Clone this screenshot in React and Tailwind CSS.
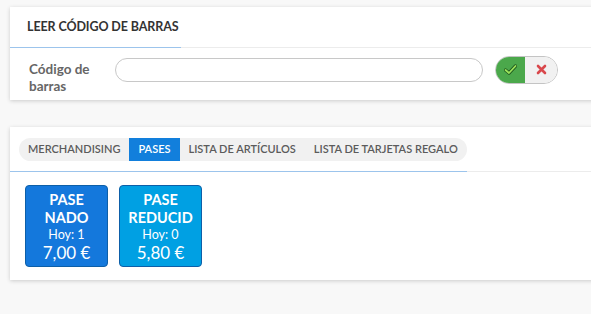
import React from "react";

const Tile = ({ title, sub, hoy, price, color }) => (
  <button
    className={`w-[83px] h-[82px] rounded-[4px] border border-[#0d5fa8] ${color} text-white flex flex-col items-center pt-[5px] leading-none overflow-hidden`}
  >
    <span className="text-[14.5px] font-bold h-[18px] flex items-center">{title}</span>
    <span className="text-[14.5px] font-bold h-[18px] flex items-center whitespace-nowrap">{sub}</span>
    <span className="text-[12.5px] h-[16px] flex items-center">{hoy}</span>
    <span className="text-[17px] h-[19px] flex items-center">{price}</span>
  </button>
);

const App = () => {
  const tabs = ["MERCHANDISING", "PASES", "LISTA DE ARTÍCULOS", "LISTA DE TARJETAS REGALO"];

  return (
    <div className="min-h-screen bg-[#f8f8f8] pt-[7px] pl-[10px] overflow-hidden" style={{ fontFamily: "Lato, 'Open Sans', sans-serif" }}>
      {/* Barcode card */}
      <div className="bg-white shadow-[0_1px_4px_rgba(0,0,0,0.18)] h-[93px] w-[600px]">
        <div className="border-b border-[#ececec] h-[41px] flex">
          <div className="pl-[17px] pr-[2px] h-[41px] border-b border-[#9cc4ec] flex items-center">
            <span className="text-[12.5px] font-bold text-[#333] tracking-[-0.1px]">LEER CÓDIGO DE BARRAS</span>
          </div>
        </div>
        <div className="flex items-center h-[51px]">
          <div className="w-[105px] pl-[19px] text-[13.5px] font-bold text-[#666] leading-[17px] pt-[8px]">
            Código de<br />barras
          </div>
          <div className="w-[368px] h-[24px] rounded-full border border-[#c8c8c8] bg-white -mt-[7px]" />
          <div className="ml-[12px] -mt-[8px] flex h-[28px] w-[63px] rounded-full border border-[#c4c4c4] overflow-hidden">
            <div className="w-[29px] bg-[#4ba84b] flex items-center justify-center">
              <svg width="13" height="11" viewBox="0 0 13 11">
                <path d="M1.5 6 L5 9 L11.5 2" fill="none" stroke="#1f5a1f" strokeWidth="3.4" strokeLinecap="round" strokeLinejoin="round" />
                <path d="M1.5 6 L5 9 L11.5 2" fill="none" stroke="#9be35a" strokeWidth="1.8" strokeLinecap="round" strokeLinejoin="round" />
              </svg>
            </div>
            <div className="flex-1 bg-[#f1f1f1] flex items-center justify-center">
              <svg width="11" height="11" viewBox="0 0 11 11">
                <path d="M2 2 L9 9 M9 2 L2 9" stroke="#d9484c" strokeWidth="2.6" strokeLinecap="round" />
              </svg>
            </div>
          </div>
        </div>
      </div>

      {/* Products card */}
      <div className="bg-white shadow-[0_1px_4px_rgba(0,0,0,0.18)] mt-[27px] h-[153px] w-[600px]">
        <div className="border-b border-[#ececec] flex">
          <div className="pl-[9px] pt-[11px] pb-[10px] border-b border-[#9cc4ec] -mb-px">
            <div className="flex h-[23px] rounded-full bg-[#f1f1f1] overflow-hidden">
              {tabs.map((t) => (
                <div
                  key={t}
                  className={`px-[9px] flex items-center text-[11px] font-semibold whitespace-nowrap ${t === "PASES" ? "bg-[#127fdc] text-white" : "text-[#5b5b5b]"}`}
                >
                  {t}
                </div>
              ))}
            </div>
          </div>
        </div>
        <div className="flex gap-[11px] pl-[15px] pt-[13px]">
          <Tile title="PASE" sub="NADO" hoy="Hoy: 1" price="7,00 €" color="bg-[#1478dc]" />
          <Tile title="PASE" sub="REDUCID" hoy="Hoy: 0" price="5,80 €" color="bg-[#00a0e3]" />
        </div>
      </div>
    </div>
  );
};

export default App;
